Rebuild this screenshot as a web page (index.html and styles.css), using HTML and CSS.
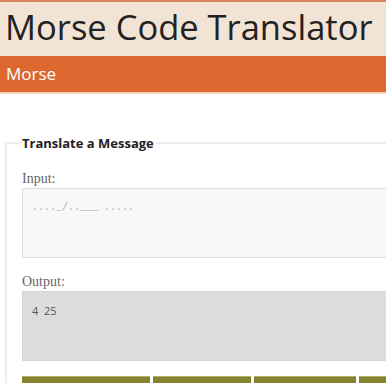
FILE: index.html
```html
<!DOCTYPE html>
<html lang="en">
<head>
    <meta charset="UTF-8">
    <title>Morse Code Translator</title>
    <link rel="stylesheet" href="styles.css">
</head>
<body>

<div class="header">
    <h1>Morse Code Translator</h1>
</div>
<div class="nav">Morse</div>

<div class="main">
    <fieldset class="panel">
        <legend>Translate a Message</legend>

        <label for="input">Input:</label>
        <textarea id="input" class="box input">...._/..___ .....</textarea>

        <label for="output" class="next">Output:</label>
        <textarea id="output" class="box output" readonly>4  25</textarea>

        <!-- Buttons -->
        <div class="buttons">
            <button class="btn w1">Translate</button>
            <button class="btn w2">Clear</button>
            <button class="btn w3">Swap</button>
            <button class="btn w4">Play</button>
        </div>
    </fieldset>
</div>

</body>
</html>
```

FILE: styles.css
```css
/* Basic Reset */
* {
    margin: 0;
    padding: 0;
    box-sizing: border-box;
}
body {
    font-family: "Open Sans", sans-serif;
    background: #fff;
    overflow: hidden;
    width: 600px;
}
/* Header */
.header {
    background: #f2e4d4;
    border-top: 2px solid #d9825e;
    height: 56px;
    padding-left: 5px;
}
.header h1 {
    font-weight: 400;
    font-size: 34.5px;
    line-height: 50px;
    color: #222;
}
.nav {
    background: #dc672f;
    color: #fff;
    font-size: 17px;
    line-height: 36px;
    height: 38px;
    padding-left: 6px;
    border-bottom: 2px solid #f3d3ba;
}
/* Form */
.main {
    padding: 40px 0 0 5px;
}
.panel {
    border: 2px solid #ececec;
    padding: 0 15px;
    height: 320px;
}
.panel legend {
    font-weight: 700;
    font-size: 13px;
    color: #222;
    padding: 0 2px;
    margin-left: -2px;
}
.panel label {
    display: block;
    font-family: "Liberation Serif", serif;
    font-size: 14px;
    color: #666;
    margin-top: 19px;
    line-height: 16px;
}
.panel label.next {
    margin-top: 16px;
}
.box {
    display: block;
    width: 500px;
    height: 70px;
    margin-top: 1px;
    border: 1px solid #dcdcdc;
    background: #f8f8f8;
    padding: 11px 9px;
    font-family: "Open Sans", sans-serif;
    font-size: 11px;
    color: #555;
    resize: none;
    white-space: pre;
}
.input {
    font-family: "Liberation Mono", monospace;
    font-size: 10px;
    color: #aaa;
    padding-top: 13px;
}
.output {
    background: #dcdcdc;
    border-color: #d4d4d4;
}
.buttons {
    display: flex;
    gap: 3px;
    margin-top: 15px;
}
.btn {
    height: 60px;
    padding-top: 22px;
    background: #858330;
    border: none;
    border-top: 1px solid #b2b06a;
    color: #fff;
    font-size: 13px;
}
.w1 { width: 128px; }
.w2 { width: 98px; }
.w3 { width: 102px; }
.w4 { width: 100px; }
```
